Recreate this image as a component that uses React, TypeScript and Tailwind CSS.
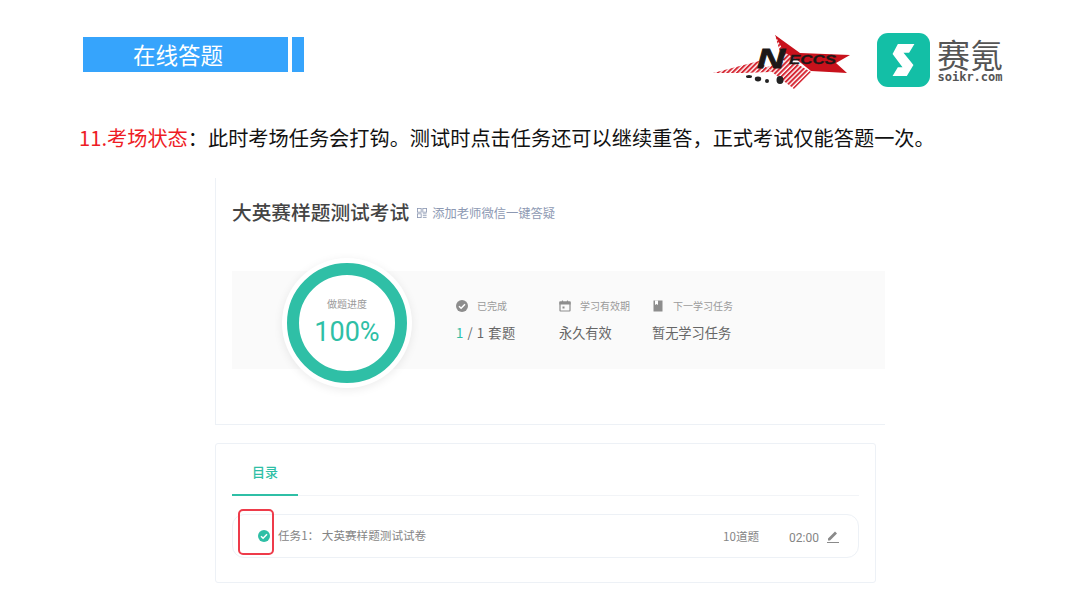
import React from 'react';

const CJK = "font-['Noto_Sans_CJK_SC','Noto_Sans',sans-serif]";

const NeccsLogo = () => (
  <svg width="140" height="56" viewBox="0 0 140 56">
    <defs>
      <pattern id="stripes" width="3.4" height="3.4" patternUnits="userSpaceOnUse" patternTransform="rotate(45)">
        <rect width="3.4" height="3.4" fill="#fff" />
        <rect width="2" height="3.4" fill="#d62834" />
      </pattern>
    </defs>
    <polygon points="1,39 47,27 60,38 30,39" fill="url(#stripes)" />
    <polygon points="55,33 78,26 99,38 82,55 60,38" fill="url(#stripes)" />
    <polygon points="63,1 88,22 76,30 70,25" fill="url(#stripes)" />
    <polygon points="63,1 88,19 138,21 124,29 135,39 99,37 84,25 72,18" fill="#c8121c" />
    <text x="45" y="34" fontFamily="Liberation Sans" fontWeight="700" fontStyle="italic" fontSize="28" textLength="28" lengthAdjust="spacingAndGlyphs" fill="#1c1818" stroke="#1c1818" strokeWidth="0.8">N</text>
    <text x="77" y="30" fontFamily="Liberation Sans" fontWeight="700" fontStyle="italic" fontSize="13" textLength="47" lengthAdjust="spacingAndGlyphs" fill="#1c1818" stroke="#1c1818" strokeWidth="0.3">ECCS</text>
    <ellipse cx="37" cy="42.5" rx="3" ry="1.5" fill="#222" />
    <ellipse cx="46" cy="45" rx="3.2" ry="2.4" fill="#222" />
    <circle cx="55" cy="47" r="2" fill="#222" />
    <ellipse cx="68" cy="46" rx="3.5" ry="4" fill="#222" />
  </svg>
);

const SoikrLogo = () => (
  <div className="flex items-center gap-[7px]">
    <div className="w-[53px] h-[54px] rounded-[11px] bg-[#13bfa6]">
      <svg viewBox="0 0 160 160" className="w-full h-full">
        <path d="M63 32H113L97 58H80L110 95L90 128H47L63 102H77L47 62Z" fill="#fff" />
      </svg>
    </div>
    <div className="flex flex-col items-center w-[66px]">
      <span className={`${CJK} text-[33px] leading-[35px] text-[#555] whitespace-nowrap`}>赛氪</span>
      <span className="font-['DejaVu_Sans_Mono',monospace] text-[12px] leading-[11px] font-bold text-[#555] whitespace-nowrap">soikr.com</span>
    </div>
  </div>
);

const CheckFilled = ({ className }: { className: string }) => (
  <svg viewBox="0 0 24 24" className={className}>
    <circle cx="12" cy="12" r="12" fill="currentColor" />
    <path d="M6 12.5l4.2 4L18 8.5" fill="none" stroke="#fff" strokeWidth="3" />
  </svg>
);

const CalendarIcon = () => (
  <svg viewBox="0 0 24 24" className="w-[12px] h-[12px] text-[#8d8d8d]" fill="none" stroke="currentColor" strokeWidth="2.4">
    <rect x="2" y="4" width="20" height="18" rx="1" />
    <path d="M2 4h20v4H2z" fill="currentColor" />
    <path d="M7 1v4M17 1v4" />
    <rect x="7" y="13" width="4" height="4" fill="currentColor" stroke="none" />
  </svg>
);

const BookIcon = () => (
  <svg viewBox="0 0 24 24" className="w-[12px] h-[12px] text-[#8d8d8d]">
    <path d="M3 1h18v22H3z" fill="currentColor" />
    <path d="M6 1h6v9l-3-2-3 2z" fill="#fff" />
  </svg>
);

const QrIcon = () => (
  <svg viewBox="0 0 12 12" className="w-[10px] h-[10px] text-[#8d99b3]" fill="none" stroke="currentColor" strokeWidth="1">
    <rect x="0.5" y="0.5" width="4.5" height="4.5" />
    <rect x="7" y="0.5" width="4.5" height="4.5" />
    <rect x="0.5" y="7" width="4.5" height="4.5" />
    <path d="M7 7h4.5M7 9.2h4.5M7 11.5h4.5" />
  </svg>
);

const Stat = ({ icon, label, width, children }: { icon: React.ReactNode; label: string; width: string; children: React.ReactNode }) => (
  <div className={`${width} flex flex-col`}>
    <div className="flex items-center gap-[9px] h-[14px] mt-[1px]">
      {icon}
      <span className="text-[10px] text-[#9a9a9a]">{label}</span>
    </div>
    <div className="mt-[10px] text-[13.2px] leading-[20px] text-[#666]">{children}</div>
  </div>
);

export default function App() {
  return (
    <div className={`${CJK} w-[1080px] h-[607px] bg-white overflow-hidden flex flex-col`}>
      {/* slide header */}
      <div className="flex items-start h-[90px] shrink-0">
        <div className="mt-[37px] ml-[83px] w-[205px] h-[35px] bg-[#36a4fc] flex items-center justify-center text-[22.5px] text-white pr-[15px]">
          在线答题
        </div>
        <div className="mt-[37px] ml-[4px] w-[12px] h-[35px] bg-[#36a4fc]" />
        <div className="ml-[408px] mt-[34px]">
          <NeccsLogo />
        </div>
        <div className="ml-[25px] mt-[33px]">
          <SoikrLogo />
        </div>
      </div>

      <p className="ml-[79px] mt-[33px] h-[30px] text-[20.2px] leading-[30px] text-[#111] whitespace-nowrap">
        <span className="text-[#ee1c25]">11.考场状态</span>：此时考场任务会打钩。测试时点击任务还可以继续重答，正式考试仅能答题一次。
      </p>

      {/* embedded exam page */}
      <div className="ml-[215px] mt-[25px] w-[670px] h-[247px] shrink-0 border-l border-b border-[#edf1f6] pl-[16px] flex flex-col">
        <div className="mt-[19px] h-[30px] flex items-center">
          <span className="text-[19.7px] text-[#444] font-medium">大英赛样题测试考试</span>
          <span className="ml-[8px] mt-[2px]"><QrIcon /></span>
          <span className="ml-[5px] mt-[2px] text-[12.3px] text-[#8d99b3]">添加老师微信一键答疑</span>
        </div>
        <div className="mt-[44px] h-[98px] bg-[#fafafa] flex items-center">
          <div className="ml-[50px] mt-[6px] shrink-0 w-[130px] h-[130px] rounded-full bg-white shadow-[0_2px_10px_rgba(0,0,0,0.08)] flex items-center justify-center">
            <div className="w-[120px] h-[120px] rounded-full border-[12px] border-[#2fbfa6] flex flex-col items-center justify-center">
              <span className="text-[10px] leading-[14px] text-[#9a9a9a]">做题进度</span>
              <span className="font-['Roboto',sans-serif] text-[27px] leading-[36px] text-[#2fbfa6] mt-[3px]">100%</span>
            </div>
          </div>
          <div className="ml-[44px] flex">
            <Stat icon={<CheckFilled className="w-[12px] h-[12px] text-[#8d8d8d]" />} label="已完成" width="w-[103px]">
              <span className="tracking-[0.6px]"><span className="text-[#2fbfa6]">1</span> / 1 套题</span>
            </Stat>
            <Stat icon={<CalendarIcon />} label="学习有效期" width="w-[93px]">永久有效</Stat>
            <Stat icon={<BookIcon />} label="下一学习任务" width="w-[100px]">暂无学习任务</Stat>
          </div>
        </div>
      </div>

      <div className="relative ml-[215px] mt-[18px] w-[661px] h-[140px] shrink-0 border border-[#edf1f6] rounded-[3px] px-[16px]">
        <div className="h-[52px] border-b border-[#f2f4f7]">
          <div className="w-[66px] h-[52px] border-b-2 border-[#2fbfa6] flex items-center justify-center pt-[6px] text-[13px] text-[#2fbfa6] font-medium">
            目录
          </div>
        </div>
        <div className="mt-[18px] h-[44px] border border-[#edf1f6] rounded-[12px] flex items-center pl-[25px] text-[11.6px] text-[#858585]">
          <CheckFilled className="w-[12px] h-[12px] text-[#2fbfa6]" />
          <span className="ml-[8px]">任务1： 大英赛样题测试试卷</span>
          <span className="ml-auto mt-[2px]">10道题</span>
          <span className="ml-[30px] mt-[3px] font-['Roboto',sans-serif] text-[12px]">02:00</span>
          <svg viewBox="0 0 14 14" className="ml-[7px] mr-[18px] w-[14px] h-[14px] text-[#8a8a8a]">
            <path d="M2 9.5L9 2.5l2 2-7 7H2zM1 13h12v1H1z" fill="currentColor" />
          </svg>
        </div>
        {/* red annotation box over the row */}
        <div className="absolute left-[22px] top-[65px] w-[36px] h-[46px] border-2 border-[#ee3b4a] rounded-[5px]" />
      </div>
    </div>
  );
}
